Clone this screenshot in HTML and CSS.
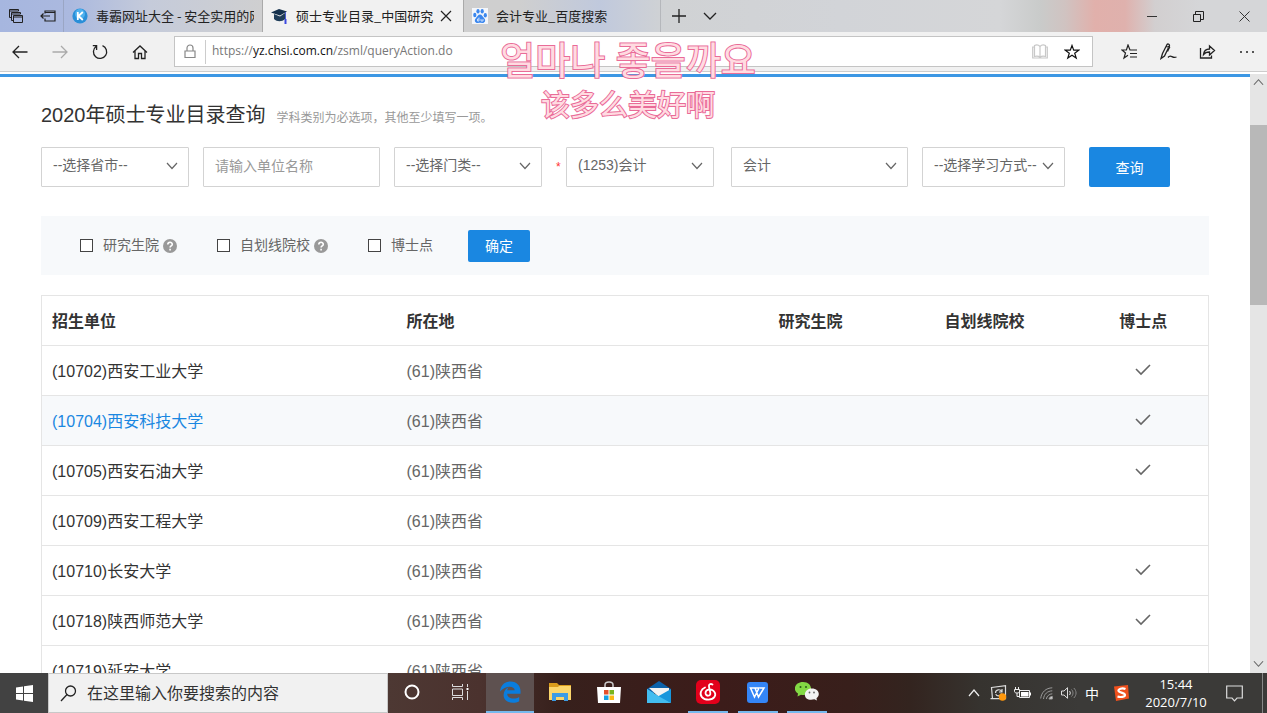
FILE: index.html
```html
<!DOCTYPE html>
<html lang="zh-CN">
<head>
<meta charset="utf-8">
<title>硕士专业目录_中国研究生招生信息网</title>
<link rel="stylesheet" href="styles.css">
</head>
<body>
<svg class="defs" width="0" height="0" aria-hidden="true">
  <symbol id="chev" viewBox="0 0 12 8"><path d="M1 1l5 5.500 5-5.500" fill="none" stroke="currentColor" stroke-width="1.200"/></symbol>
  <symbol id="check" viewBox="0 0 16 12"><path d="M1 5l5 5 9-9" fill="none" stroke="currentColor" stroke-width="1.600"/></symbol>
  <symbol id="help" viewBox="0 0 14 14"><circle cx="7" cy="7" r="7" fill="#999"/><path d="M4.800 5.600c0-3 4.500-3 4.500-.3 0 1.600-2.200 1.600-2.200 3.200M7.100 9.800v1.600" fill="none" stroke="#fff" stroke-width="1.600"/></symbol>
</svg>

<header class="tabbar">
  <div class="tab-tools">
    <button class="icon-btn" aria-label="标签页"><svg width="16" height="16" viewBox="0 0 16 16" fill="none" stroke="#222"><path d="M3 9.500H1.500v-8h9V3M1.500 3h9M5 12.500H3.500v-8h9V6M3.500 6h9"/><path d="M5.500 7.500h9v7h-9zM5.500 9h9"/></svg></button>
    <button class="icon-btn" aria-label="搁置标签页"><svg width="16" height="14" viewBox="0 0 16 14" fill="none" stroke="#222" stroke-width="1.200"><path d="M5 4.500V2h10v10H5V9.500M5 3.500h10M10 7H1M3.500 4.500L1 7l2.500 2.500"/></svg></button>
  </div>
  <div class="tab">
    <svg class="fav" width="16" height="16" viewBox="0 0 16 16"><circle cx="8" cy="8" r="7.600" fill="#2a8fd8"/><circle cx="8" cy="6" r="5" fill="#4fb1ee"/><path d="M5.800 4v8M10.800 4L6.500 8l4.300 4" fill="none" stroke="#fff" stroke-width="1.800"/></svg>
    <span class="tab-title">毒霸网址大全 - 安全实用的网址导航</span>
  </div>
  <div class="tab active">
    <svg class="fav" width="17" height="17" viewBox="0 0 17 17"><path d="M0 4.500L8 1l8 2.500-7 4z" fill="#14304c"/><path d="M3 6l6 2.500L14 5v6c-3 3-8 3-11 0z" fill="#1f3d59"/><path d="M14.500 4v7" stroke="#4b5fd0"/><path d="M13.500 11h2v5h-2z" fill="#3c48e0"/></svg>
    <span class="tab-title">硕士专业目录_中国研究</span>
    <button class="icon-btn tab-close" aria-label="关闭标签页"><svg width="12" height="12" viewBox="0 0 12 12" stroke="#222" stroke-width="1.200"><path d="M1 1l10 10M11 1L1 11"/></svg></button>
  </div>
  <div class="tab last">
    <svg class="fav" width="16" height="16" viewBox="0 0 16 16"><path fill="#f3f6fb" d="M0 0h16v16H0z"/><g fill="#3b87ee"><ellipse cx="2.800" cy="7" rx="1.600" ry="2.200"/><ellipse cx="6" cy="3.200" rx="1.600" ry="2.200"/><ellipse cx="10.200" cy="3.200" rx="1.600" ry="2.200"/><ellipse cx="13.300" cy="7.300" rx="1.600" ry="2.200"/><path d="M8 6.500c2 0 2.500 2 4 3.500 2.500 2.500.5 5.500-2 5-1.500-.3-2.500-.3-4 0-2.500.5-4.500-2.500-2-5C5.500 8.500 6 6.500 8 6.500z"/></g><path d="M7 9.500v3.500H5.500v-2H7M9 11v2h2v-2" fill="none" stroke="#e8f0fc" stroke-width=".8"/></svg>
    <span class="tab-title">会计专业_百度搜索</span>
  </div>
  <button class="icon-btn new-tab" aria-label="新建标签页"><svg width="14" height="14" viewBox="0 0 14 14" stroke="#222" stroke-width="1.300"><path d="M7 0v14M0 7h14"/></svg></button>
  <button class="icon-btn tab-more" aria-label="标签页预览"><svg width="14" height="8" viewBox="0 0 14 8" fill="none" stroke="#222" stroke-width="1.300"><path d="M1 1l6 6 6-6"/></svg></button>
  <div class="win-buttons">
    <button class="icon-btn" aria-label="最小化"><svg width="10" height="10" viewBox="0 0 10 10" stroke="#333"><path d="M0 5.500h10"/></svg></button>
    <button class="icon-btn" aria-label="还原"><svg width="11" height="11" viewBox="0 0 11 11" fill="none" stroke="#222"><path d="M.5 3.500h7v7h-7zM2.500 3.500v-3h8v8h-3"/></svg></button>
    <button class="icon-btn" aria-label="关闭"><svg width="11" height="11" viewBox="0 0 11 11" stroke="#333"><path d="M.5.5l10 10M10.500.5l-10 10"/></svg></button>
  </div>
</header>

<nav class="toolbar">
  <div class="nav-buttons">
    <button class="icon-btn" aria-label="后退"><svg width="16" height="14" viewBox="0 0 16 14" fill="none" stroke="#222" stroke-width="1.300"><path d="M15.500 7H1M7 1L1 7l6 6"/></svg></button>
    <button class="icon-btn" aria-label="前进"><svg width="16" height="14" viewBox="0 0 16 14" fill="none" stroke="#aaa" stroke-width="1.300"><path d="M.5 7H15M9 1l6 6-6 6"/></svg></button>
    <button class="icon-btn" aria-label="刷新"><svg width="16" height="16" viewBox="0 0 16 16" fill="none" stroke="#222" stroke-width="1.300"><path d="M10.500 1.700A6.600 6.600 0 1 1 4 2.600M4.600 6V1.700H.8"/></svg></button>
    <button class="icon-btn" aria-label="主页"><svg width="16" height="16" viewBox="0 0 16 16" fill="none" stroke="#222" stroke-width="1.300"><path d="M1 8.500L8 2l7 6.500M3 7v7.500h3.500v-5h3v5H13V7"/></svg></button>
  </div>
  <div class="address">
    <svg class="lock" width="12" height="15" viewBox="0 0 12 15" fill="none" stroke="#888" stroke-width="1.200"><path d="M1 7h10v6.500H1zM3 7V4a3 3 0 0 1 6 0v3"/></svg>
    <a class="url" href="#">https://<span class="host">yz.chsi.com.cn</span>/zsml/queryAction.do</a>
    <button class="icon-btn" aria-label="阅读视图"><svg width="16" height="15" viewBox="0 0 16 15" fill="none" stroke="#c8c8c8" stroke-width="1.200"><path d="M8 2.500C6.500.8 4 .8 2.500 1.500v11c2-.6 4-.5 5.500.8 1.500-1.300 3.500-1.400 5.500-.8v-11C12 .8 9.500.8 8 2.500v11M2.500 3H.7v11h14.600V3h-1.800"/></svg></button>
    <button class="icon-btn" aria-label="收藏"><svg width="16" height="16" viewBox="0 0 16 16" fill="none" stroke="#111" stroke-width="1.200"><path d="M8 1.500l1.700 4.700h5l-4 3 1.500 4.900L8 11.200l-4.200 2.900 1.500-4.900-4-3h5z"/></svg></button>
  </div>
  <div class="tool-buttons">
    <button class="icon-btn" aria-label="中心"><svg width="17" height="16" viewBox="0 0 17 16" fill="none" stroke="#222" stroke-width="1.200"><path d="M16 6H9L7 1 5.400 6H1l3.500 3L3 14l4-2.800M9 9.500h7M9 13h7"/></svg></button>
    <button class="icon-btn" aria-label="添加备注"><svg width="17" height="17" viewBox="0 0 17 17" fill="none" stroke="#222" stroke-width="1.300"><path d="M1 15.500l1.500-5L7 1.500c1-1.200 3 0 2.300 1.500L4.500 13zM1 15.500L4.500 13M6 3.500l3.500 1-2 4M8 14.500c3-4 4 1.500 8.500-.5"/></svg></button>
    <button class="icon-btn" aria-label="共享"><svg width="17" height="16" viewBox="0 0 17 16" fill="none" stroke="#222" stroke-width="1.300"><path d="M1.500 4v10h11v-2.500M4.500 10.500C5 6 7 5 10.500 5V2l5 4.500-5 4.500V8C8 8 6 8.500 4.500 10.500z"/></svg></button>
    <button class="icon-btn" aria-label="设置及更多"><svg width="16" height="4" viewBox="0 0 16 4" fill="#222"><circle cx="2" cy="2" r="1"/><circle cx="8" cy="2" r="1"/><circle cx="14" cy="2" r="1"/></svg></button>
  </div>
</nav>

<div class="viewport">
  <main class="page">
    <div class="heading">
      <h1>2020年硕士专业目录查询</h1>
      <span class="hint">学科类别为必选项，其他至少填写一项。</span>
    </div>
    <form class="search">
      <div class="select w-mid"><select aria-label="省市"><option>--选择省市--</option></select><svg class="chev"><use href="#chev"/></svg></div>
      <input class="text w-wide" type="text" aria-label="单位名称" placeholder="请输入单位名称">
      <div class="select w-mid"><select aria-label="门类"><option>--选择门类--</option></select><svg class="chev"><use href="#chev"/></svg></div>
      <span class="required">*</span>
      <div class="select w-mid"><select aria-label="学科类别"><option>(1253)会计</option></select><svg class="chev"><use href="#chev"/></svg></div>
      <div class="select w-wide major"><select aria-label="专业"><option>会计</option></select><svg class="chev"><use href="#chev"/></svg></div>
      <div class="select w-small"><select aria-label="学习方式"><option>--选择学习方式--</option></select><svg class="chev"><use href="#chev"/></svg></div>
      <button class="primary query" type="button">查询</button>
    </form>
    <form class="filters">
      <label><input type="checkbox"><span>研究生院</span><svg class="help"><use href="#help"/></svg></label>
      <label><input type="checkbox"><span>自划线院校</span><svg class="help"><use href="#help"/></svg></label>
      <label><input type="checkbox"><span>博士点</span></label>
      <button class="primary confirm" type="button">确定</button>
    </form>
    <table class="schools">
      <colgroup><col class="c-school"><col class="c-place"><col class="c-grad"><col class="c-line"><col class="c-phd"></colgroup>
      <thead><tr><th>招生单位</th><th>所在地</th><th class="mid">研究生院</th><th class="mid">自划线院校</th><th class="mid">博士点</th></tr></thead>
      <tbody>
        <tr><td><a href="#">(10702)西安工业大学</a></td><td>(61)陕西省</td><td></td><td></td><td class="mid"><svg class="check"><use href="#check"/></svg></td></tr>
        <tr class="hover"><td><a href="#">(10704)西安科技大学</a></td><td>(61)陕西省</td><td></td><td></td><td class="mid"><svg class="check"><use href="#check"/></svg></td></tr>
        <tr><td><a href="#">(10705)西安石油大学</a></td><td>(61)陕西省</td><td></td><td></td><td class="mid"><svg class="check"><use href="#check"/></svg></td></tr>
        <tr><td><a href="#">(10709)西安工程大学</a></td><td>(61)陕西省</td><td></td><td></td><td></td></tr>
        <tr><td><a href="#">(10710)长安大学</a></td><td>(61)陕西省</td><td></td><td></td><td class="mid"><svg class="check"><use href="#check"/></svg></td></tr>
        <tr><td><a href="#">(10718)陕西师范大学</a></td><td>(61)陕西省</td><td></td><td></td><td class="mid"><svg class="check"><use href="#check"/></svg></td></tr>
        <tr><td><a href="#">(10719)延安大学</a></td><td>(61)陕西省</td><td></td><td></td><td></td></tr>
      </tbody>
    </table>
  </main>
  <div class="scrollbar">
    <svg class="arrow up"><use href="#chev"/></svg>
    <div class="track"><div class="thumb"></div></div>
    <svg class="arrow"><use href="#chev"/></svg>
  </div>
</div>

<footer class="taskbar">
  <button class="icon-btn start" aria-label="开始"><svg width="17" height="17" viewBox="0 0 17 17" fill="#fff"><path d="M0 2.500l7-1V8H0zM8 1.300L17 0v8H8zM0 9h7v6.500l-7-1zM8 9h9v8l-9-1.300z"/></svg></button>
  <label class="search-box">
    <svg width="17" height="17" viewBox="0 0 17 17" fill="none" stroke="#222" stroke-width="1.300"><circle cx="10.500" cy="6" r="5"/><path d="M7 9.500L1 16"/></svg>
    <input type="text" aria-label="搜索" placeholder="在这里输入你要搜索的内容">
  </label>
  <button class="icon-btn task" aria-label="Cortana"><svg width="16" height="16" viewBox="0 0 16 16"><circle cx="8" cy="8" r="6.500" fill="none" stroke="#fff" stroke-width="2"/></svg></button>
  <button class="icon-btn task" aria-label="任务视图"><svg width="18" height="16" viewBox="0 0 18 16" fill="none" stroke="#ddd"><path d="M1.500 0v2.500h10V0M1.500 5h10v6.500h-10zM1.500 16v-2.500h10V16M16.500 0v3M16.500 7v9"/><path d="M15.500 4h2v2h-2z" fill="#fff" stroke="none"/></svg></button>
  <div class="apps">
    <button class="icon-btn task current" aria-label="Edge"><svg width="21" height="22" viewBox="0 0 21 22" fill="#0a7ddd"><path d="M0 10.500C1 3.500 5 .5 10.500.5 17 .5 20.500 5 20.500 10v2.700H7.200c.2 5.300 7.600 6 12 3.300v4.300C13 23.500 3.600 21.700 3.600 14c0-3.600 2-6.300 5-7.800-.9 1-1.300 2.100-1.400 3h7.500C14.600 4.300 5 4.200 0 10.500z"/></svg></button>
    <button class="icon-btn task" aria-label="文件资源管理器"><svg width="22" height="18" viewBox="0 0 22 18"><path fill="#d99c1c" d="M0 0h8l2 2h12v4H0z"/><path fill="#fbd66b" d="M0 4h9l1-1h12v14H0z"/><path fill="#3c9ce4" d="M3 18v-8h16v8h-4v-4H7v4z"/></svg></button>
    <button class="icon-btn task" aria-label="应用商店"><svg width="24" height="23" viewBox="0 0 24 23"><path d="M8 7V4c0-4 8-4 8 0v3" fill="none" stroke="#ccc" stroke-width="1.500"/><path fill="#fff" d="M0 6h24l-1 16H1z"/><path fill="#e5502b" d="M7 9h4.500v4.500H7z"/><path fill="#7ab51d" d="M12.500 9H17v4.500h-4.500z"/><path fill="#16a0e4" d="M7 14.500h4.500V19H7z"/><path fill="#fbb912" d="M12.500 14.500H17V19h-4.500z"/></svg></button>
    <button class="icon-btn task" aria-label="邮件"><svg width="24" height="22" viewBox="0 0 24 22"><path fill="#0c62aa" d="M0 8l12-8 12 8v4H0z"/><path fill="#f3f3f3" d="M2 7h20v7l-9 3z"/><path fill="#34b5ee" d="M0 8l12 8 12 6H0z"/><path fill="#1796dc" d="M24 8v14L10 16z"/><path fill="#43bdf0" d="M0 8l13 8 11 6H0z"/></svg></button>
    <button class="icon-btn task open" aria-label="网易云音乐"><svg width="24" height="24" viewBox="0 0 24 24"><rect width="24" height="24" rx="5" fill="#e2001b"/><path d="M16.500 4.500c-2-1.200-4 0-3.500 2.200l1.300 6c.8 4-4.800 4-4.800.2 0-3.500 5.500-4.500 8-2 4 4 .5 8.800-5 8.800C6.500 19.700 3.500 15.500 5 11.500c.6-1.700 2-3.200 4-4" fill="none" stroke="#fff" stroke-width="1.800" stroke-linecap="round"/></svg></button>
    <button class="icon-btn task open" aria-label="WPS"><svg width="21" height="21" viewBox="0 0 21 21"><rect width="21" height="21" rx="3" fill="#3485f6"/><path d="M3.500 6H12l-4.500 9zM8 6l3.500 9 5.500-9h-4" fill="none" stroke="#fff" stroke-width="1.500"/></svg></button>
    <button class="icon-btn task open" aria-label="微信"><svg width="24" height="20" viewBox="0 0 24 20"><path d="M8 0c10 0 11 12 1 13-1 .1-2 0-3-.2L2.500 14.500 3 11.500C-3 8 0 0 8 0z" fill="#83d944"/><path d="M16.500 6.500c8 0 9 7 5 9.700l.4 2.300-2.500-1.200c-6 1.500-10-1-9.500-5.300.3-3 3-5.500 6.600-5.500z" fill="#f2f2f2"/><circle cx="5.500" cy="5" r="1" fill="#285c16"/><circle cx="11" cy="5" r="1" fill="#285c16"/><circle cx="14.500" cy="10.500" r=".9" fill="#666"/><circle cx="19" cy="10.500" r=".9" fill="#666"/></svg></button>
  </div>
  <div class="tray">
    <svg width="12" height="8" viewBox="0 0 12 8" fill="none" stroke="#eee" stroke-width="1.200"><path d="M1 7l5-6 5 6"/></svg>
    <svg width="17" height="16" viewBox="0 0 17 16" fill="none" stroke="#ddd" stroke-width="1.200"><path d="M1.500 2.500L15.500.7v13H2.500zM.5 13.700h3M5.500 8c0-4 5-4 6-1.500M12 4v3H9M11.500 8.500c-1 3-5 3-5.700.7"/><circle cx="12.500" cy="12" r="3.700" fill="#ff980d" stroke="none"/></svg>
    <svg width="17" height="12" viewBox="0 0 17 12" fill="none" stroke="#eee"><path d="M1.500 0v2M4.500 0v2M.5 2.500h5v2c0 2-5 2-5 0zM3 6v3.500h2.500M5.500 3.500h10v7h-10z"/><path d="M7 5h7.500v4.500H7zM15.500 5.500h1.500v3h-1.500z" fill="#fff" stroke="none"/></svg>
    <svg width="13" height="13" viewBox="0 0 13 13" fill="none" stroke="#999"><path d="M.7 11.500C1.500 5 6 1 12.300.8M3.500 12C4 7 7.500 4 12.300 3.800M6.300 12c.5-3 3-5 6-5.200" /><path d="M9 12c.3-1.500 1.500-2.500 3.300-2.600V12z" fill="#ddd"/></svg>
    <svg width="16" height="12" viewBox="0 0 16 12" fill="none" stroke="#ddd"><path d="M.5 4H3l3.500-3.300v10.600L3 8H.5zM8.500 4c1 1.300 1 2.700 0 4"/><path d="M10.500 2.500c2 2 2 5 0 7M12.800 1c3 3 3 7 0 10" stroke="#888"/></svg>
    <span class="ime">中</span>
    <svg width="17" height="16" viewBox="0 0 17 16"><path d="M1 1.500L15 0l1 13.500L3 16z" fill="#f0501d"/><path d="M12.500 4C9 2.500 5 4 5.500 6c.4 1.800 6.500 1.500 6.500 4 0 2-4.500 2.500-7.500 1.500" fill="none" stroke="#fff" stroke-width="2.200"/></svg>
    <time class="clock"><span>15:44</span><span>2020/7/10</span></time>
    <svg width="17" height="17" viewBox="0 0 17 17" fill="none" stroke="#ddd" stroke-width="1.200"><path d="M.7 1h15.600v12H11l-2.500 2.800L6 13H.7z"/></svg>
    <span class="peek"></span>
  </div>
</footer>

<div class="lyrics"><p class="ko" lang="ko">얼마나 좋을까요</p><p class="zh">该多么美好啊</p></div>
</body>
</html>
```
FILE: styles.css
```css
* { box-sizing: border-box; }
body {
  margin: 0;
  height: 100vh;
  display: flex;
  flex-direction: column;
  overflow: hidden;
  background: #fff;
  color: #333;
  font-family: "Liberation Sans", "Noto Sans CJK SC", sans-serif;
  font-size: 16px;
}
.defs { position: absolute; }
svg { display: block; flex: none; }
button, input, select { font: inherit; color: inherit; margin: 0; }
a { color: inherit; text-decoration: none; }
.icon-btn {
  display: flex;
  align-items: center;
  justify-content: center;
  flex: none;
  padding: 0;
  border: 0;
  background: none;
}

/* Tab strip */
.tabbar {
  display: flex;
  flex: none;
  height: 32px;
  background: linear-gradient(90deg, #a6b6df 0, #abb9df 70px, #c5cbda 150px, #cfcfd0 262px, #cfcfcf 520px, #c0c9dd 600px, #d0d2d4 665px, #d2d4d8 840px, #d5d6d8 1000px, #c9cbca 1040px, #d0c3c1 1065px, #e1b0ab 1095px, #dfb1ad 1125px, #d2cfd0 1155px, #d5d6d8 1200px);
}
.tab-tools { display: flex; width: 63px; }
.tab-tools .icon-btn { width: 32px; }
.tab {
  display: flex;
  align-items: center;
  gap: 8px;
  width: 199px;
  padding: 0 8px;
  border-left: 1px solid #9aa6c4;
  font: 13px/20px "Noto Sans CJK SC", sans-serif;
  color: #222;
}
.tab-title { flex: 1; overflow: hidden; white-space: nowrap; }
.tab.active { background: #f1f1f1; border-color: #aaa; width: 201px; }
.tab-close { width: 16px; margin: 0 1px 0 -5px; }
.tab.last { width: 198px; border-left-color: #aaa; border-right: 1px solid #b5b7bb; }
.new-tab { width: 36px; }
.tab-more { width: 26px; }
.win-buttons { display: flex; margin-left: auto; }
.win-buttons .icon-btn { width: 46px; }

/* Navigation bar */
.toolbar {
  display: flex;
  align-items: center;
  flex: none;
  height: 40px;
  background: #f1f1f1;
  border-bottom: 1px solid #ccc;
}
.nav-buttons { display: flex; width: 174px; }
.nav-buttons .icon-btn { width: 40px; }
.address {
  display: flex;
  align-items: center;
  flex: 1;
  height: 31px;
  padding: 0 4px 0 9px;
  border: 1px solid #c4c4c4;
  background: #fff;
}
.url {
  flex: 1;
  margin-left: 9px;
  padding: 0 0 3px 6px;
  border-left: 1px solid #ccc;
  font: 12px/21px "Open Sans", sans-serif;
  color: #777;
}
.host { color: #111; }
.address .icon-btn { width: 32px; }
.tool-buttons { display: flex; width: 174px; padding-left: 17px; }
.tool-buttons .icon-btn { width: 39px; }

/* Page */
.viewport { display: flex; flex: 1; min-height: 0; padding-top: 2px; }
.page {
  flex: 1;
  min-width: 0;
  overflow: hidden;
  padding: 22px 41px 0;
  border-top: 3px solid #3c97e4;
}
.heading { display: flex; align-items: baseline; gap: 11px; }
h1 { margin: 0; font-size: 20px; line-height: 32px; font-weight: 400; }
.hint { font-size: 12px; color: #999; }
.search {
  display: flex;
  align-items: center;
  gap: 14px;
  margin-top: 16px;
  font-size: 14px;
}
.select { position: relative; color: #666; }
.select select, .text {
  display: block;
  width: 100%;
  height: 40px;
  padding: 0 11px 4px;
  border: 1px solid #d3d3d3;
  border-radius: 1px;
  background: #fff;
  appearance: none;
  outline: 0;
}
.text { padding-bottom: 2px; }
.text::placeholder { color: #999; opacity: 1; }
.select .chev { position: absolute; right: 11px; top: 15px; width: 12px; height: 8px; color: #666; }
.search .w-mid { width: 148px; }
.search .w-wide { width: 177px; }
.search .w-small { width: 143px; }
.required { width: 6px; margin-right: -10px; color: #f33; font-size: 12px; }
.major { margin-left: 3px; }
.primary {
  border: 0;
  border-radius: 2px;
  background: #1a87e1;
  color: #fff;
  font-size: 14px;
}
.query { width: 81px; height: 40px; margin-left: 10px; }
.filters {
  display: flex;
  align-items: center;
  height: 59px;
  margin: 29px 0 20px;
  padding-left: 39px;
  background: #f7f9fb;
  font-size: 14px;
  line-height: 18px;
  color: #666;
}
.filters label { display: flex; align-items: center; margin-right: 40px; }
.filters label:nth-of-type(3) { margin-right: 35px; }
.filters span { padding-bottom: 2px; }
.filters input {
  width: 13px;
  height: 13px;
  margin-right: 10px;
  appearance: none;
  border: 1px solid #444;
  background: #fff;
}
.help { width: 14px; height: 14px; margin-left: 4px; }
.confirm { width: 62px; height: 32px; }

.schools {
  width: 100%;
  table-layout: fixed;
  border-collapse: collapse;
  border: 1px solid #e5e5e5;
  color: #666;
}
.c-school { width: 355px; }
.c-grad { width: 160px; }
.c-line { width: 188px; }
.c-phd { width: 130px; }
.schools th, .schools td {
  height: 50px;
  padding: 0 10px 2px;
  border-bottom: 1px solid #e5e5e5;
  text-align: left;
}
.schools th { color: #333; }
.schools a { color: #333; }
.schools .hover { background: #f7f9fb; }
.schools .hover a { color: #1a87e1; }
.schools .mid { text-align: center; }
.check { width: 16px; height: 12px; margin: 0 auto; color: #666; }

.scrollbar {
  display: flex;
  flex-direction: column;
  width: 17px;
  background: #e5e5e5;
  color: #666;
}
.arrow { width: 11px; height: 8px; margin: 5px 3px; }
.arrow.up { transform: scaleY(-1); margin-top: 4px; }
.track { flex: 1; padding-top: 34px; }
.thumb { height: 180px; background: #b8b8b8; }

/* Task bar */
.taskbar {
  display: flex;
  flex: none;
  height: 40px;
  background: linear-gradient(90deg, #4d3833 388px, #4b322e 480px, #37201c 560px, #3c1c1a 720px, #381f1b 850px, #33241f 910px, #36332f 980px, #3b3a38 1080px);
  color: #fff;
}
.start { width: 48px; background: #424242; }
.search-box {
  display: flex;
  align-items: center;
  gap: 10px;
  width: 340px;
  padding: 0 11px;
  border: 1px solid #c8c8c8;
  background: #f1f1f1;
}
.search-box input { flex: 1; min-width: 0; padding: 2px 0 0; border: 0; background: none; outline: 0; }
.search-box input::placeholder { color: #333; opacity: 1; }
.task { width: 48px; height: 40px; border-bottom: 2px solid transparent; }
.apps { display: flex; justify-content: space-between; width: 347px; padding-left: 2px; }
.task.current { background: #5e5150; border-color: #76b9ed; }
.apps .task.open { width: 40px; margin: 0 4px; border-color: #76b9ed; }
.tray {
  display: grid;
  grid-template-columns: 24px 24px 24px 24px 22px 24px 34px 76px 40px 13px;
  align-items: center;
  justify-items: center;
  margin-left: auto;
}
.ime { font: 14px/20px "Noto Sans CJK SC", sans-serif; }
.clock {
  display: flex;
  flex-direction: column;
  align-items: center;
  font: 13px/18px "Open Sans", sans-serif;
}
.peek { justify-self: end; width: 5px; height: 40px; border-left: 1px solid #888; }

/* Floating desktop lyrics over the windows */
.lyrics {
  position: absolute;
  top: 35px;
  left: 0;
  width: 100%;
  padding-right: 11px;
  text-align: center;
  pointer-events: none;
  color: #ffdbe1;
  -webkit-text-stroke: 2px #e96c98;
}
.lyrics p { margin: 0; font-weight: 400; paint-order: stroke fill; }
.ko { font: 38px/46px "Noto Sans CJK KR", sans-serif; }
.zh { font: 29px/44px "Noto Sans CJK SC", sans-serif; }
```
